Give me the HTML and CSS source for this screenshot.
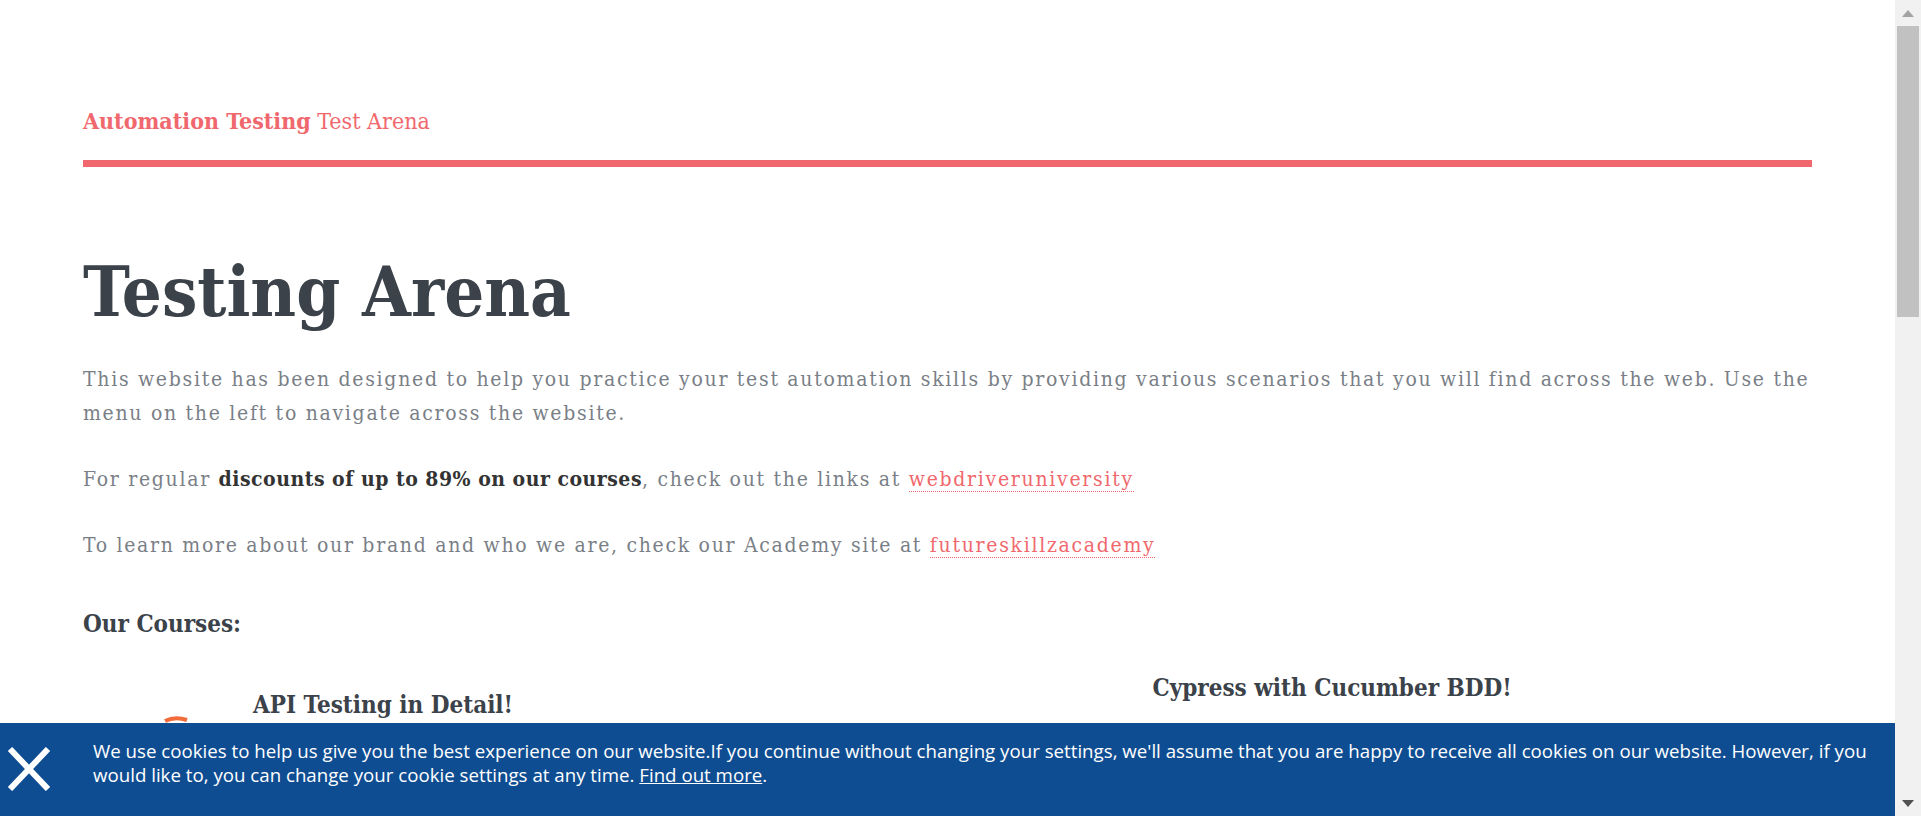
FILE: index.html
```html
<!DOCTYPE html>
<html lang="en">
<head>
<meta charset="utf-8">
<title>Testing Arena</title>
<link rel="stylesheet" href="styles.css">
</head>
<body>
<header class="site-header">
  <div class="container">
    <p class="brand"><strong>Automation Testing</strong> Test Arena</p>
  </div>
</header>
<main class="container content">
  <h1 class="title">Testing Arena</h1>
  <p class="lead">This website has been designed to help you practice your test automation skills by providing various scenarios that you will find across the web. Use the menu on the left to navigate across the website.</p>
  <p class="lead">For regular <strong>discounts of up to 89% on our courses</strong>, check out the links at <a href="#">webdriveruniversity</a></p>
  <p class="lead">To learn more about our brand and who we are, check our Academy site at <a href="#">futureskillzacademy</a></p>
  <h3 class="courses-title">Our Courses:</h3>
  <div class="courses">
    <div class="course course-left">
      <div class="course-thumb"><svg width="90" height="90" viewBox="0 0 90 90"><path d="M2 6 Q 12 1 24 5" fill="none" stroke="#f26b3a" stroke-width="4"/></svg></div>
      <div class="course-body">
        <h4 class="course-name">API Testing in Detail!</h4>
        <p class="course-text">Learn how to test REST APIs in detail using Postman, Newman and more.</p>
      </div>
    </div>
    <div class="course course-right">
      <div class="course-body">
        <h4 class="course-name">Cypress with Cucumber BDD!</h4>
        <p class="course-text">Build a robust Cypress framework with Cucumber BDD from scratch.</p>
      </div>
    </div>
  </div>
  <div class="more-courses">
    <p class="course-text">Selenium WebDriver, Java, Cucumber BDD and many more courses.</p>
  </div>
</main>
<div class="scrollbar" aria-hidden="true">
  <div class="scroll-btn"><svg width="12" height="7" viewBox="0 0 12 7"><path d="M0 7 L6 0 L12 7 Z" fill="#a3a3a3"/></svg></div>
  <div class="scroll-track"><div class="scroll-thumb"></div></div>
  <div class="scroll-btn"><svg width="12" height="7" viewBox="0 0 12 7"><path d="M0 0 L6 7 L12 0 Z" fill="#505050"/></svg></div>
</div>
<div class="cookie-bar">
  <button class="cookie-close" aria-label="Close">
    <svg width="46" height="44" viewBox="0 0 46 44"><path d="M4 2 L42 42 M42 2 L4 42" stroke="#fff" stroke-width="6" fill="none"/></svg>
  </button>
  <p class="cookie-text">We use cookies to help us give you the best experience on our website.If you continue without changing your settings, we'll assume that you are happy to receive all cookies on our website. However, if you would like to, you can change your cookie settings at any time. <a href="#">Find out more</a>.</p>
</div>
</body>
</html>
```
FILE: styles.css
```css
body {
  margin: 0;
  padding-right: 26px;
  background: #fff;
  font-family: "DejaVu Serif Condensed", "DejaVu Serif", serif;
  color: #7a7f87;
}
.container {
  margin: 0 83px;
}
.site-header .container {
  padding-top: 106px;
  border-bottom: 7px solid #f0686d;
  padding-bottom: 24px;
}
.brand {
  margin: 0;
  font-size: 23px;
  color: #f0686d;
  line-height: 30px;
}
.brand strong { font-weight: bold; }
.content { padding-top: 82px; padding-bottom: 1200px; }
.title {
  margin: 0 0 27px;
  font-size: 70px;
  line-height: 86px;
  color: #3b4249;
  font-weight: bold;
}
.lead {
  margin: 0 0 32px;
  font-size: 21px;
  line-height: 34px;
  letter-spacing: 1.7px;
  color: #7a7f87;
}
.lead strong { color: #333; font-weight: bold; letter-spacing: 0.5px; }
.lead a {
  color: #f0686d;
  text-decoration: none;
  border-bottom: 1px dotted #f0686d;
}
.courses-title {
  margin: 47px 0 0;
  font-size: 24px;
  color: #3b4249;
  font-weight: bold;
  line-height: 30px;
}
.courses {
  display: grid;
  grid-template-columns: 1fr 1fr;
  margin-top: 34px;
}
.course { display: flex; }
.course-left { padding-left: 80px; padding-top: 17px; }
.course-right { padding-left: 205px; }
.course-thumb { width: 90px; height: 90px; margin-top: 25px; flex: none; }
.course-name {
  margin: 0 0 40px;
  font-size: 24px;
  color: #3b4249;
  font-weight: bold;
  line-height: 30px;
}
.course-text { margin: 0; font-size: 18px; line-height: 30px; color: #7a7f87; }

.scrollbar {
  position: fixed;
  top: 0; right: 0; bottom: 0;
  width: 26px;
  background: #f1f1f1;
  display: flex;
  flex-direction: column;
}
.scroll-btn {
  height: 26px;
  display: flex;
  align-items: center;
  justify-content: center;
}
.scroll-track { flex: 1; padding: 0 2px; }
.scroll-thumb { height: 291px; background: #c1c1c1; }

.cookie-bar {
  position: fixed;
  left: 0; right: 26px; bottom: 0;
  height: 93px;
  background: #0f4d92;
  display: flex;
  align-items: flex-start;
  font-family: "Open Sans", sans-serif;
}
.cookie-close {
  background: none; border: 0; padding: 0;
  margin: 24px 0 0 6px;
  width: 46px; height: 44px;
}
.cookie-close svg { display: block; }
.cookie-text {
  margin: 16px 20px 0 41px;
  font-size: 18.7px;
  line-height: 24px;
  color: #fff;
}
.cookie-text a { color: #fff; }
```
